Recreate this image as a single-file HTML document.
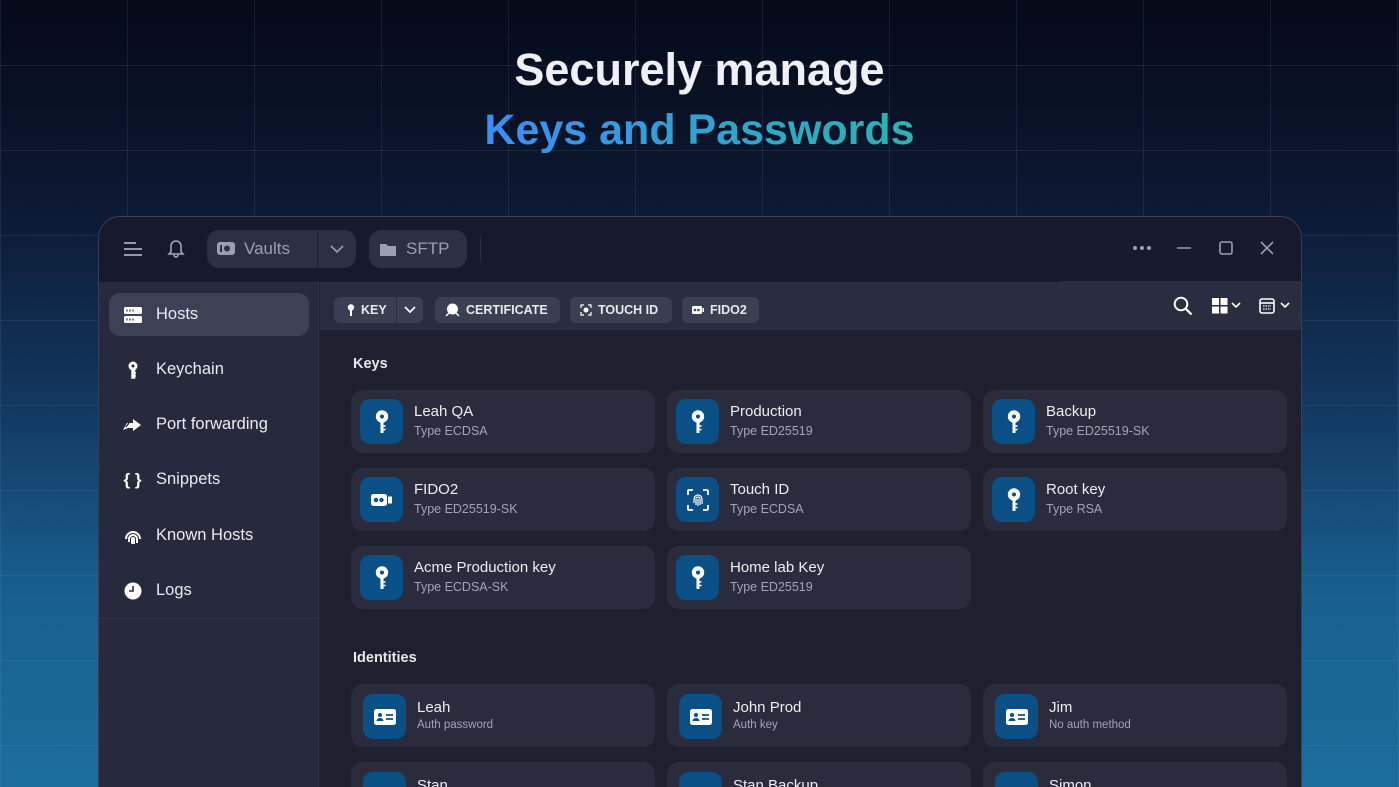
<!DOCTYPE html>
<html style="width:1399px;height:787px;overflow:hidden"><head><meta charset="utf-8"><style>
*{margin:0;padding:0;box-sizing:border-box}
body{width:1399px;height:787px;overflow:hidden;position:relative;font-family:"Liberation Sans",sans-serif;
background:linear-gradient(180deg,#060a19 0%,#0b1830 25%,#12365e 50%,#185f8e 75%,#1b6e9c 100%);}
.grid{position:absolute;inset:0;background-image:linear-gradient(90deg,rgba(120,150,200,.14) 1px,transparent 1px),linear-gradient(0deg,rgba(120,150,200,.14) 1px,transparent 1px);background-size:127px 85px;background-position:127px 66px}
h1{position:absolute;left:0;right:0;text-align:center;font-weight:bold}
.t1{top:44px;color:#eef0f5;font-size:45px}
.t2{top:106px;font-size:43px}
.t2 span{background:linear-gradient(90deg,#3b8ef5,#2bb4ad);-webkit-background-clip:text;background-clip:text;color:transparent}
.win{position:absolute;left:98px;top:216px;width:1204px;height:600px;border-radius:22px;overflow:hidden;background:#1e2030;border:1px solid #3a3f55}
.tb{position:absolute;left:0;top:0;right:0;height:65px;background:#161a2a}
.side{position:absolute;left:0;top:65px;width:220px;bottom:0;background:#272a3d;border-right:1px solid #33364a}
.tool{position:absolute;left:221px;top:65px;right:0;height:48px;background:#2a2d3f}
.pill{position:absolute;background:#2c3042;border-radius:12px;color:#9aa0b0;font-size:17px;display:flex;align-items:center}
.chip{position:absolute;top:80px;height:26px;background:#3b3f52;border-radius:6px;color:#e8eaf0;font-size:12.5px;font-weight:bold;display:flex;align-items:center;padding:0 10px;gap:6px}
.nav{position:absolute;left:10px;width:200px;height:43px;display:flex;align-items:center;color:#e9ebf1;font-size:16.5px}
.nav .ic{width:47px;display:flex;justify-content:center}
.sec{position:absolute;left:254px;color:#e6e8ee;font-weight:bold;font-size:14.5px}
.card{position:absolute;width:304px;height:63px;background:#2a2c3e;border-radius:12px}
.card .i{position:absolute;left:9px;top:9px;width:43px;height:45px;border-radius:10px;background:#0a4f85;display:flex;align-items:center;justify-content:center}
.card .n{position:absolute;left:63px;top:13px;color:#eceef3;font-size:15px}
.card .s{position:absolute;left:63px;top:34px;color:#a1a6b4;font-size:12.5px}
.card.id .i{left:12px;top:10px}.card.id .n{left:66px;top:15px}.card.id .s{left:66px;top:35px;font-size:11.5px}
#cards{position:absolute;left:0;top:0;width:1399px;height:787px;overflow:hidden}
</style></head><body>
<div class="grid"></div>
<h1 class="t1">Securely manage</h1>
<h1 class="t2"><span>Keys and Passwords</span></h1>
<div class="win">
 <div class="tb">
  <svg style="position:absolute;left:24px;top:24px" width="20" height="16"><path d="M1 2h12M1 8h18M1 14h18" stroke="#a7acb9" stroke-width="1.8"/></svg>
  <svg style="position:absolute;left:68px;top:21px" width="18" height="20"><path d="M4 14V8a5 5 0 0 1 10 0v6l2 2H2zM7 17a2 2 0 0 0 4 0" fill="none" stroke="#a7acb9" stroke-width="1.5"/></svg>
  <div class="pill" style="left:108px;top:13px;width:149px;height:38px">
   <svg style="margin-left:10px" width="18" height="14"><rect x="0" y="0" width="18" height="13" rx="3" fill="#9aa0b0"/><circle cx="10" cy="6.5" r="3" fill="#2c3042"/><rect x="3" y="3" width="2" height="7" fill="#2c3042"/></svg>
   <span style="margin-left:9px">Vaults</span>
   <div style="position:absolute;left:110px;top:0;width:1px;height:38px;background:#1c1f2e"></div>
   <svg style="position:absolute;left:123px;top:14px" width="14" height="10"><path d="M1 2l6 6 6-6" fill="none" stroke="#9aa0b0" stroke-width="1.6"/></svg>
  </div>
  <div class="pill" style="left:270px;top:13px;width:98px;height:38px">
   <svg style="margin-left:11px" width="16" height="13"><path d="M0 1h6l2 2h8v10H0z" fill="#9aa0b0"/></svg>
   <span style="margin-left:10px">SFTP</span>
  </div>
  <div style="position:absolute;left:381px;top:20px;width:1px;height:24px;background:#2d3142"></div>
  <svg style="position:absolute;left:1033px;top:28px" width="20" height="6"><circle cx="3" cy="3" r="2" fill="#9aa0b0"/><circle cx="10" cy="3" r="2" fill="#9aa0b0"/><circle cx="17" cy="3" r="2" fill="#9aa0b0"/></svg>
  <svg style="position:absolute;left:1078px;top:30px" width="14" height="3"><path d="M0 1h14" stroke="#9aa0b0" stroke-width="1.6"/></svg>
  <svg style="position:absolute;left:1120px;top:24px" width="14" height="14"><rect x="1" y="1" width="12" height="12" rx="2" fill="none" stroke="#9aa0b0" stroke-width="1.6"/></svg>
  <svg style="position:absolute;left:1161px;top:24px" width="14" height="14"><path d="M1 1l12 12M13 1L1 13" stroke="#9aa0b0" stroke-width="1.6"/></svg>
 </div>
 <div class="side">
  <div style="position:absolute;left:0;right:0;top:336px;height:1px;background:#33364a"></div>
 </div>
 <div class="nav" style="top:76px;background:#3d4155;border-radius:11px"><div class="ic"><svg width="18" height="16"><rect x="0" y="0" width="18" height="7" rx="1.5" fill="#fff"/><rect x="0" y="9" width="18" height="7" rx="1.5" fill="#fff"/><path d="M3 2.5v2M6 2.5v2M9 2.5v2M3 11.5v2M6 11.5v2M9 11.5v2" stroke="#3d4155" stroke-width="1.3"/></svg></div><span>Hosts</span></div>
 <div class="nav" style="top:131px"><div class="ic"><svg width="12" height="18"><circle cx="6" cy="5" r="4.5" fill="#fff"/><circle cx="6" cy="5" r="1.5" fill="#272a3d"/><path d="M5 9h2.5v8H5zM7 12h2M7 15h2" stroke="#fff" stroke-width="1.5" fill="#fff"/></svg></div><span>Keychain</span></div>
 <div class="nav" style="top:186px"><div class="ic"><svg width="20" height="14"><path d="M0 12l4-7h6V1l8 6-8 6v-3H5z" fill="#fff"/><path d="M3 9l3-4" stroke="#272a3d" stroke-width="1.3"/></svg></div><span>Port forwarding</span></div>
 <div class="nav" style="top:241px"><div class="ic" style="font-weight:bold;font-size:17px;color:#fff">{&nbsp;}</div><span>Snippets</span></div>
 <div class="nav" style="top:297px"><div class="ic"><svg width="18" height="18"><path d="M2 12a7 7 0 0 1 14 0M5 15v-3a4 4 0 0 1 8 0v4M8 17v-5a1 1 0 0 1 2 0v5" fill="none" stroke="#fff" stroke-width="2"/></svg></div><span>Known Hosts</span></div>
 <div class="nav" style="top:352px"><div class="ic"><svg width="18" height="18"><circle cx="9" cy="9" r="8.5" fill="#fff"/><path d="M9 4v5H5" stroke="#272a3d" stroke-width="1.6" fill="none"/></svg></div><span>Logs</span></div>
 <div class="tool">
  <svg style="position:absolute;left:853px;top:14px" width="20" height="20"><circle cx="8" cy="8" r="6.3" fill="none" stroke="#fff" stroke-width="2"/><path d="M12.5 12.5l6 6" stroke="#fff" stroke-width="2.2"/></svg>
  <svg style="position:absolute;left:892px;top:16px" width="32" height="16"><rect x="0" y="0" width="7" height="7" fill="#fff"/><rect x="8.5" y="0" width="7" height="7" fill="#fff"/><rect x="0" y="8.5" width="7" height="7" fill="#fff"/><rect x="8.5" y="8.5" width="7" height="7" fill="#fff"/><path d="M20 5l4 4 4-4" fill="none" stroke="#fff" stroke-width="1.6"/></svg>
  <svg style="position:absolute;left:939px;top:16px" width="34" height="16"><rect x="1" y="1" width="14" height="14" rx="2" fill="none" stroke="#fff" stroke-width="1.6"/><path d="M1 5h14" stroke="#fff" stroke-width="1.6"/><path d="M4 8h8M4 11h8" stroke="#fff" stroke-dasharray="1.5 1" stroke-width="1.3"/><path d="M22 5l4 4 4-4" fill="none" stroke="#fff" stroke-width="1.6"/></svg>
 </div>
 <div style="position:absolute;left:960px;top:64px;width:244px;height:1px;background:#2a2d3f"></div>
 <div class="chip" style="left:235px;width:89px;padding-left:13px"><svg width="8" height="12"><circle cx="4" cy="3.5" r="3.2" fill="#fff"/><path d="M3 6h2v6H3z" fill="#fff"/></svg>KEY
   <div style="position:absolute;left:62px;top:0;width:1px;height:26px;background:#2a2d3f"></div>
   <svg style="position:absolute;left:70px;top:9px" width="12" height="8"><path d="M1 1l5 5 5-5" fill="none" stroke="#fff" stroke-width="1.7"/></svg></div>
 <div class="chip" style="left:336px;width:125px"><svg width="15" height="14"><circle cx="7.5" cy="6" r="5.5" fill="#fff"/><path d="M1 13l3-3M14 13l-3-3" stroke="#fff" stroke-width="1.5"/></svg>CERTIFICATE</div>
 <div class="chip" style="left:471px;width:102px"><svg width="12" height="12"><path d="M1 4V1h3M8 1h3v3M11 8v3H8M4 11H1V8" fill="none" stroke="#fff" stroke-width="1.2"/><circle cx="6" cy="6" r="2.5" fill="#fff"/></svg>TOUCH ID</div>
 <div class="chip" style="left:583px;width:77px"><svg width="12" height="8"><rect x="0" y="0" width="10" height="8" rx="1.5" fill="#fff"/><circle cx="3" cy="4" r="1.3" fill="#3b3f52"/><circle cx="6.5" cy="4" r="1.3" fill="#3b3f52"/><rect x="10.5" y="2" width="1.5" height="4" fill="#fff"/></svg>FIDO2</div>
 <div class="sec" style="top:139px">Keys</div>
 <div class="sec" style="top:433px">Identities</div>
</div>
<div id="cards"></div>
<script>
const key='<svg width="14" height="24"><circle cx="7" cy="6.5" r="6.2" fill="#fff"/><circle cx="7" cy="6.5" r="2" fill="#0a4f85"/><path d="M5.5 12h3v11h-3z" fill="#fff"/><path d="M8 16h2.5M8 19.5h2.5" stroke="#fff" stroke-width="1.6"/></svg>';
const fido='<svg width="22" height="12"><rect x="0" y="0" width="16" height="12" rx="2.5" fill="#fff"/><circle cx="5" cy="6" r="2.2" fill="#0a4f85"/><circle cx="10.5" cy="6" r="2.2" fill="#0a4f85"/><rect x="17" y="2.5" width="4" height="7" fill="#fff"/></svg>';
const touch='<svg width="22" height="22"><path d="M1 6V2a1 1 0 0 1 1-1h4M16 1h4a1 1 0 0 1 1 1v4M21 16v4a1 1 0 0 1-1 1h-4M6 21H2a1 1 0 0 1-1-1v-4" fill="none" stroke="#fff" stroke-width="1.8"/><path d="M7 14V10a4 4 0 0 1 8 0v5M9 16v-6a2 2 0 0 1 4 0v6M11 10v7" fill="none" stroke="#fff" stroke-width="1.2"/></svg>';
const idc='<svg width="22" height="16"><rect x="0" y="0" width="22" height="16" rx="2.5" fill="#fff"/><circle cx="6" cy="6" r="2" fill="#0a4f85"/><path d="M2.5 12a3.5 3 0 0 1 7 0z" fill="#0a4f85"/><path d="M12 6h7M12 10h7" stroke="#0a4f85" stroke-width="1.8"/></svg>';
const X=[351,667,983];
const d=[
[0,390,key,'Leah QA','Type ECDSA'],[1,390,key,'Production','Type ED25519'],[2,390,key,'Backup','Type ED25519-SK'],
[0,468,fido,'FIDO2','Type ED25519-SK'],[1,468,touch,'Touch ID','Type ECDSA'],[2,468,key,'Root key','Type RSA'],
[0,546,key,'Acme Production key','Type ECDSA-SK'],[1,546,key,'Home lab Key','Type ED25519'],
[0,684,idc,'Leah','Auth password',1],[1,684,idc,'John Prod','Auth key',1],[2,684,idc,'Jim','No auth method',1],
[0,762,idc,'Stan','',1],[1,762,idc,'Stan Backup','',1],[2,762,idc,'Simon','',1]];
let h='';for(const c of d){h+=`<div class="card${c[5]?' id':''}" style="left:${X[c[0]]}px;top:${c[1]}px"><div class="i">${c[2]}</div><div class="n">${c[3]}</div><div class="s">${c[4]}</div></div>`}
document.getElementById('cards').innerHTML=h;
</script>
</body></html>
